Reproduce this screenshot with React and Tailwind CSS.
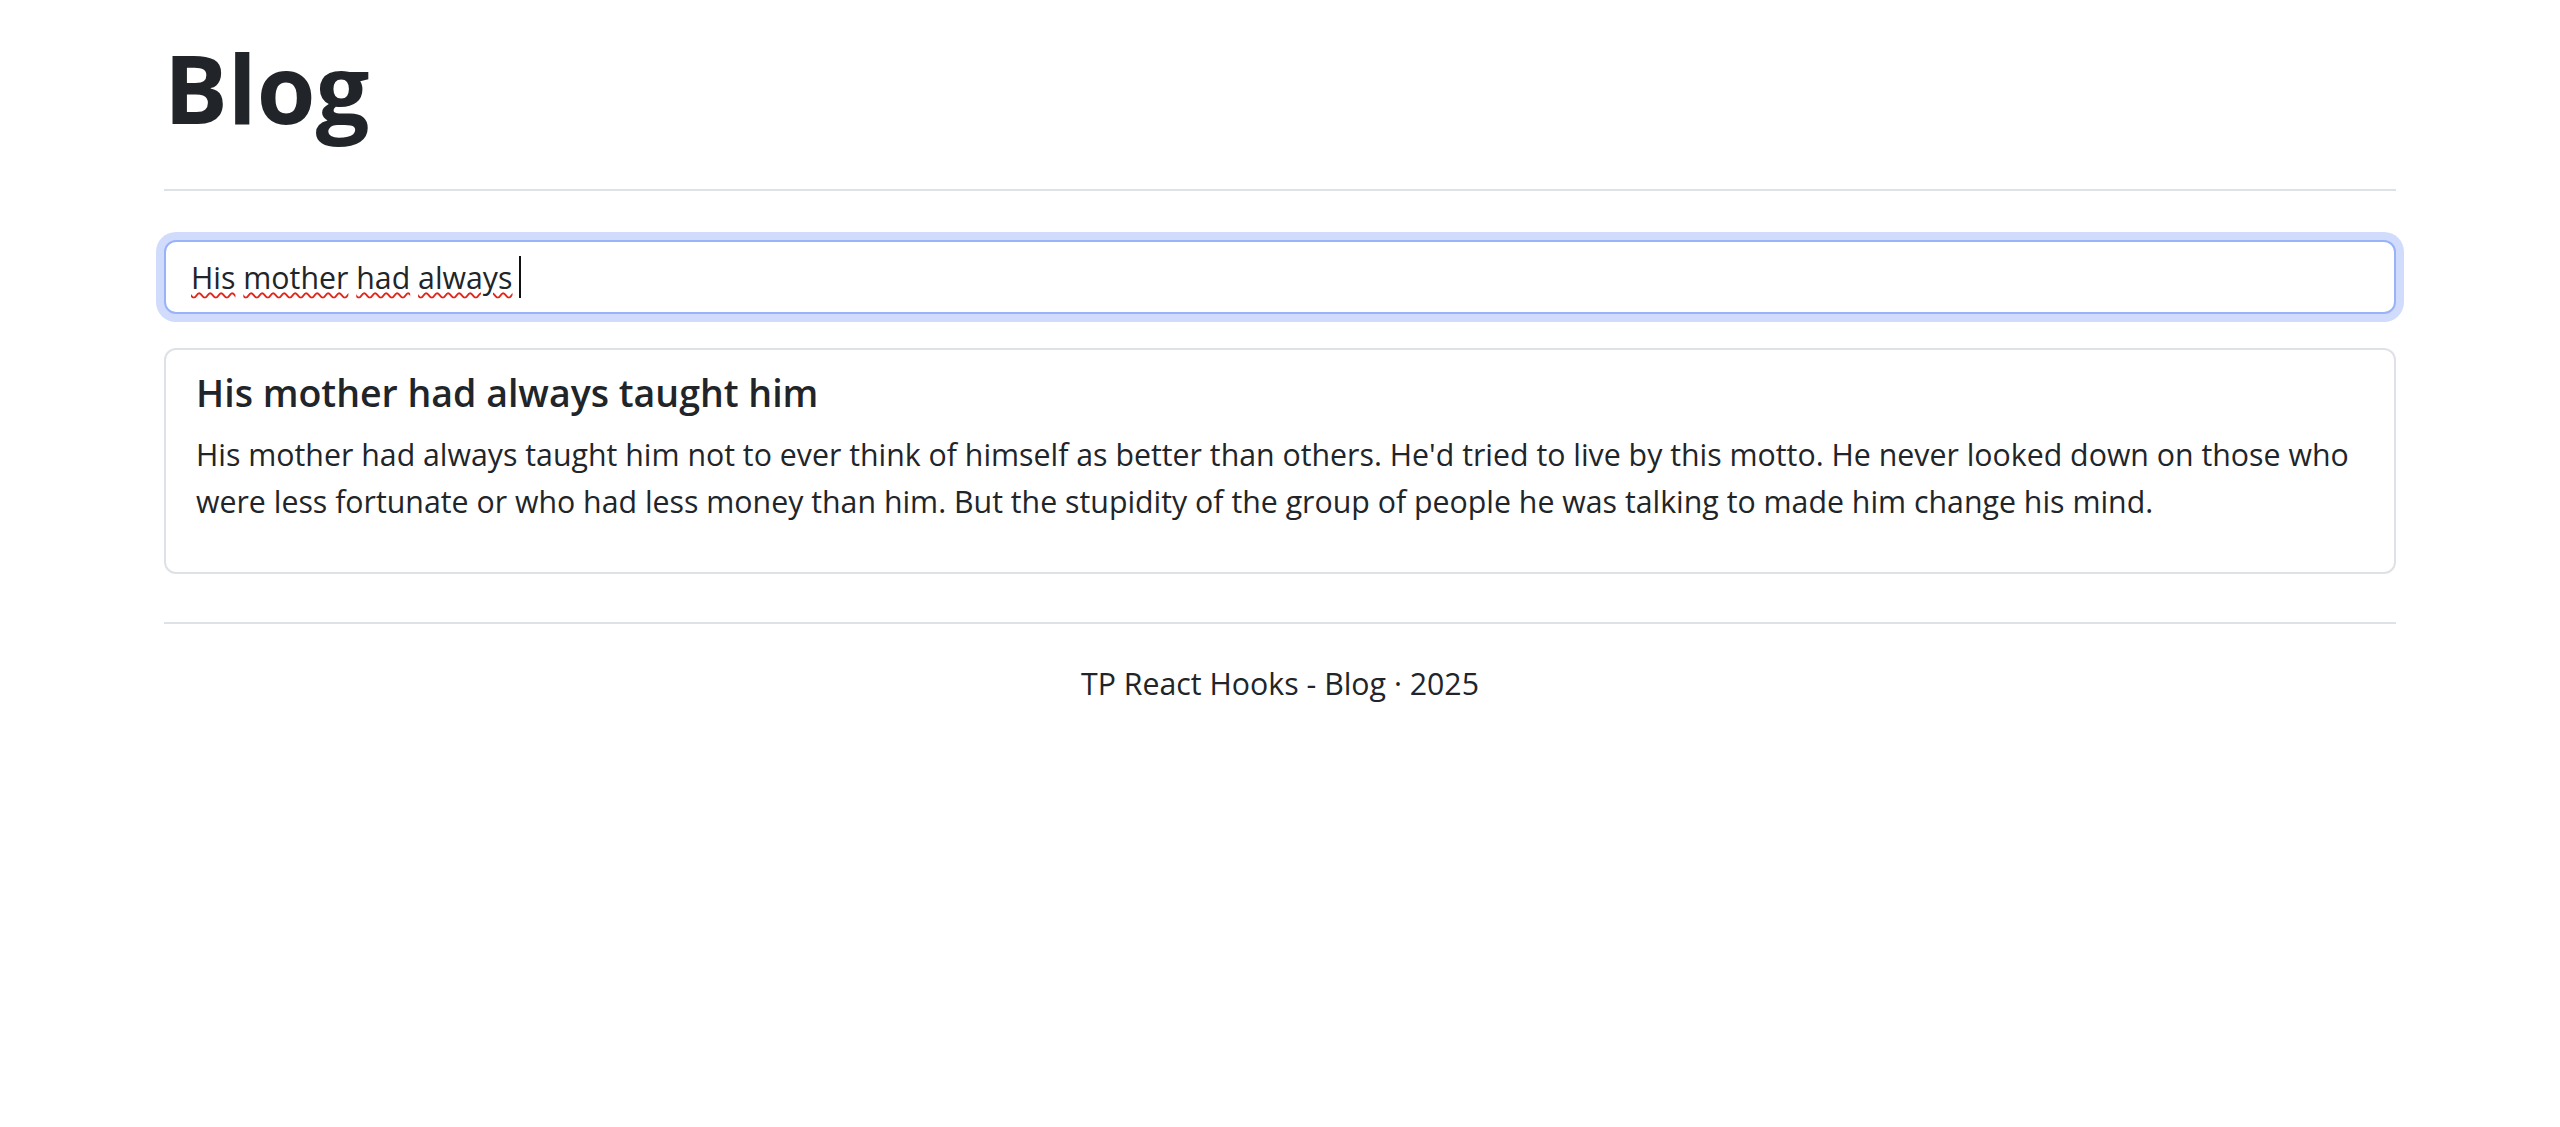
import React from 'react';

const post = {
  title: 'His mother had always taught him',
  body: "His mother had always taught him not to ever think of himself as better than others. He'd tried to live by this motto. He never looked down on those who were less fortunate or who had less money than him. But the stupidity of the group of people he was talking to made him change his mind.",
};

const query = ['His', 'mother', 'had', 'always'];

function SearchBox() {
  return (
    <div className="mt-[49px] flex h-[74px] items-center rounded-[12px] border-2 border-[#98b3f8] bg-white px-[25px] shadow-[0_0_0_8px_#d1dcfd]">
      <span className="text-[30.3px] leading-[47px] text-[#212529]">
        {query.map((w, i) => (
          <React.Fragment key={w}>
            {i > 0 && ' '}
            <span className="underline decoration-wavy decoration-[#e0271d] decoration-[1.5px] underline-offset-[3px]">{w}</span>
          </React.Fragment>
        ))}
      </span>
      {/* caret */}
      <span className="ml-[6px] inline-block h-[42px] w-[2px] bg-[#111]"></span>
    </div>
  );
}

function PostCard({ title, body }) {
  return (
    <div className="mt-[34px] rounded-[12px] border-2 border-[#dee2e6] px-[30px] pt-[20px] pb-[47px]">
      <h5 className="text-[37.5px] font-semibold leading-[1.2] text-[#212529]">{title}</h5>
      <p className="mt-[16px] text-[30.3px] leading-[47px] text-[#212529]">{body}</p>
    </div>
  );
}

export default function App() {
  return (
    <div className="min-h-screen bg-white px-[164px] pt-[30px]" style={{ fontFamily: '"Open Sans", "Noto Sans", sans-serif' }}>
      <h1 className="text-[95px] font-bold leading-[1.2] text-[#212529]">Blog</h1>
      <hr className="mt-[45px] border-0 border-t-2 border-[#dee2e6]" />
      <SearchBox />
      <PostCard {...post} />
      <hr className="mt-[48px] border-0 border-t-2 border-[#dee2e6]" />
      <footer className="mt-[36px] text-center text-[30.3px] leading-[47px] text-[#212529]">
        TP React Hooks - Blog · 2025
      </footer>
    </div>
  );
}
